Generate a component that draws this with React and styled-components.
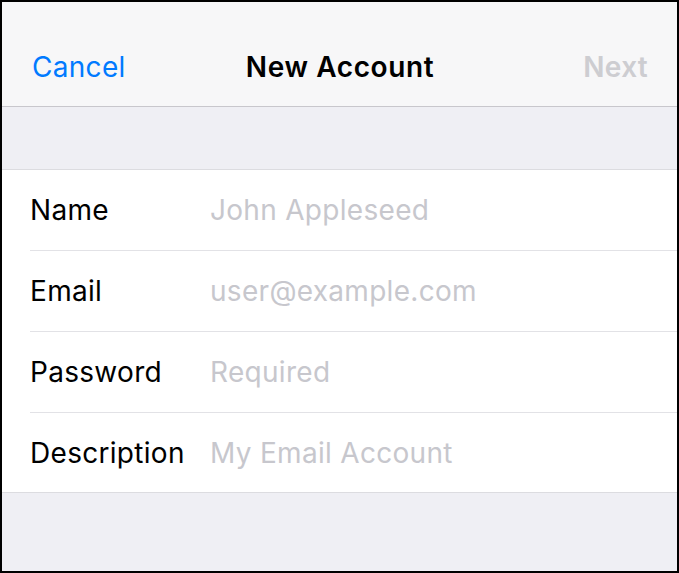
import React from "react";
import styled, { createGlobalStyle } from "styled-components";

const Global = createGlobalStyle`
  html, body { margin: 0; padding: 0; background: #000; }
  * { box-sizing: border-box; }
  body { font-family: Inter, "Liberation Sans", Arial, sans-serif; -webkit-font-smoothing: antialiased; }
`;

const Screen = styled.div`
  width: 679px;
  height: 573px;
  border: 2px solid #000;
  background: #efeff4;
  display: flex;
  flex-direction: column;
  overflow: hidden;
`;

const NavBar = styled.header`
  height: 105px;
  flex: none;
  background: #f7f7f8;
  border-bottom: 1px solid #c8c7cc;
  display: grid;
  grid-template-columns: 1fr auto 1fr;
  align-items: center;
  padding: 0 29px 0 30px;
  font-size: 28px;
  letter-spacing: 0.3px;
`;

const NavButton = styled.button`
  border: 0;
  background: none;
  padding: 0;
  font: inherit;
  letter-spacing: inherit;
  color: ${(p) => (p.$disabled ? "#cdcdd1" : "#007aff")};
  font-weight: ${(p) => (p.$bold ? 600 : 400)};
  justify-self: ${(p) => (p.$end ? "end" : "start")};
  cursor: pointer;
  margin-top: 25px;
`;

const Title = styled.h1`
  margin: 25px 0 0;
  font-size: 28px;
  font-weight: 600;
  letter-spacing: 0.6px;
  color: #000;
`;

const Spacer = styled.div`
  height: 62px;
  flex: none;
`;

const Group = styled.section`
  background: #fff;
  border-top: 1px solid #dcdce0;
  border-bottom: 1px solid #dcdce0;
  padding-left: 28px;
`;

const Row = styled.div`
  height: ${(p) => (p.$last ? "79px" : "81px")};
  display: flex;
  align-items: center;
  border-bottom: ${(p) => (p.$last ? "none" : "1px solid #e2e2e6")};
`;

const Label = styled.label`
  width: 180px;
  flex: none;
  font-size: 28px;
  color: #000;
  letter-spacing: 0.3px;
`;

const Input = styled.input`
  flex: 1;
  border: 0;
  outline: none;
  background: transparent;
  font: inherit;
  font-size: 28px;
  letter-spacing: 0.3px;
  padding: 0;
  color: #000;
  &::placeholder { color: #c7c7cd; }
`;

const fields = [
  { label: "Name", placeholder: "John Appleseed", type: "text" },
  { label: "Email", placeholder: "user@example.com", type: "email" },
  { label: "Password", placeholder: "Required", type: "password" },
  { label: "Description", placeholder: "My Email Account", type: "text" },
];

export default function App() {
  return (
    <>
      <Global />
      <Screen>
        <NavBar>
          <NavButton>Cancel</NavButton>
          <Title>New Account</Title>
          <NavButton $disabled $bold $end>Next</NavButton>
        </NavBar>
        <Spacer />
        <Group>
          {fields.map((f, i) => (
            <Row key={f.label} $last={i === fields.length - 1}>
              <Label>{f.label}</Label>
              <Input type={f.type} placeholder={f.placeholder} />
            </Row>
          ))}
        </Group>
      </Screen>
    </>
  );
}
